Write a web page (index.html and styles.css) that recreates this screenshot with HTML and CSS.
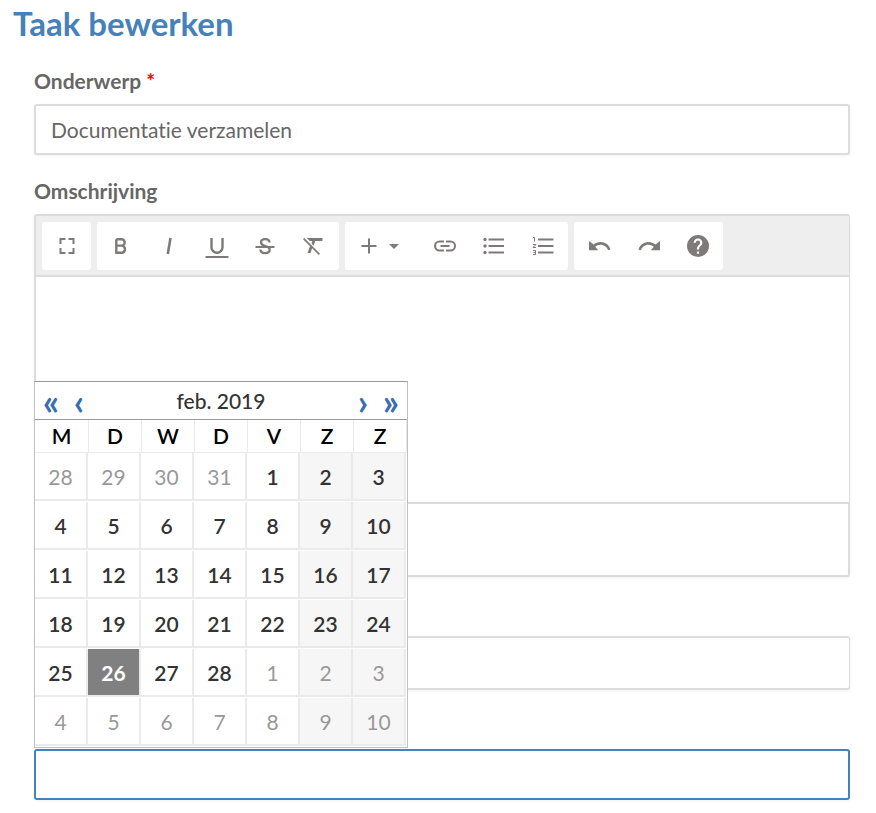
FILE: index.html
```
<!DOCTYPE html>
<html lang="nl">
<head>
<meta charset="utf-8">
<meta name="viewport" content="width=device-width, initial-scale=1">
<title>Taak bewerken</title>
<link rel="stylesheet" href="styles.css">
</head>
<body>
<h1 class="title">Taak bewerken</h1>
<form class="form">
  <label class="label" for="subject">Onderwerp <span class="required">*</span></label>
  <input class="input" id="subject" type="text" value="Documentatie verzamelen">

  <label class="label label-next" for="description">Omschrijving</label>
  <div class="editor">
    <div class="toolbar" role="toolbar">
      <div class="group">
        <button class="tool" type="button" aria-label="Volledig scherm"><svg viewBox="0 0 24 24"><path d="M5.500 10V5h5M13.500 5h5v5M18.500 14v5h-5M10.500 19h-5v-5" fill="none" stroke="currentColor" stroke-width="2"/></svg></button>
      </div>
      <div class="group group-text">
        <button class="tool" type="button" aria-label="Vet"><svg viewBox="0 0 24 24"><path d="M7.300 5.200v13.600h5.800a3.700 3.700 0 0 0 0-7.200H7.300M12.500 11.600a3.200 3.200 0 0 0 0-6.400H7.300" fill="none" stroke="currentColor" stroke-width="2.400"/></svg></button>
        <button class="tool" type="button" aria-label="Cursief"><svg viewBox="0 0 24 24"><path d="M13.500 4L10.800 20" fill="none" stroke="currentColor" stroke-width="2.600"/></svg></button>
        <button class="tool" type="button" aria-label="Onderstrepen"><svg viewBox="0 0 24 24"><path d="M6.500 4v9.300a5.500 5.500 0 0 0 11 0V4" fill="none" stroke="currentColor" stroke-width="2.400"/><path d="M.5 23h23" stroke="currentColor" stroke-width="2"/></svg></button>
        <button class="tool" type="button" aria-label="Doorhalen"><svg viewBox="0 0 24 24"><path d="M16.500 8.500c0-2-1.800-3.400-4.300-3.400S8 6.600 8 8.500s1.600 2.800 4.200 3.500 4.500 1.700 4.500 3.800-1.800 3.300-4.500 3.300-4.700-1.400-4.700-3.600" fill="none" stroke="currentColor" stroke-width="2.300"/><path d="M2.500 13h19" stroke="currentColor" stroke-width="2"/></svg></button>
        <button class="tool" type="button" aria-label="Opmaak wissen"><svg viewBox="0 0 24 24"><path d="M3.270 4L2 5.270l6.970 6.970L6.500 19h3l1.570-4.660L17.730 21 19 19.730 3.550 4.270 3.270 4zM6 4v.18L8.820 7h2.400l-.72 2.680 2.100 2.100L14.210 7H21.500V4H6z" fill="currentColor"/></svg></button>
      </div>
      <div class="group group-insert">
        <button class="tool tool-wide" type="button" aria-label="Invoegen"><svg viewBox="0 0 24 24"><path d="M12 4.500v15M4.500 12h15" stroke="currentColor" stroke-width="2"/></svg><span class="caret"></span></button>
        <button class="tool" type="button" aria-label="Koppeling"><svg viewBox="0 0 24 24"><path d="M3.200 12A3.200 3.200 0 0 1 6.400 8.600H11V6.500H6.500a5.500 5.500 0 0 0 0 11H11v-2.100H6.400A3.200 3.200 0 0 1 3.200 12zM7.500 13h9v-2h-9zM17.500 6.500H13v2.100h4.600a3.400 3.400 0 0 1 0 6.800H13v2.100h4.500a5.500 5.500 0 0 0 0-11z" fill="currentColor"/></svg></button>
        <button class="tool" type="button" aria-label="Lijst"><svg viewBox="0 0 24 24"><path d="M6.500 5.500h15.500M6.500 12h15.500M6.500 18.500h15.500" stroke="currentColor" stroke-width="2"/><g fill="currentColor"><circle cx="3" cy="5.500" r="1.700"/><circle cx="3" cy="12" r="1.700"/><circle cx="3" cy="18.500" r="1.700"/></g></svg></button>
        <button class="tool" type="button" aria-label="Genummerde lijst"><svg viewBox="0 0 24 24"><path d="M7 5.500h15.500M7 12h15.500M7 18.500h15.500" stroke="currentColor" stroke-width="2"/><path d="M2 3.500h1.500v4M2 10.500h3L2 13.500h3M2 16.500h2.500v4H2M2.500 18.500h2" fill="none" stroke="currentColor"/></svg></button>
      </div>
      <div class="group group-history">
        <button class="tool" type="button" aria-label="Ongedaan maken"><svg viewBox="0 0 24 24"><path d="M12.500 8c-2.650 0-5.050.99-6.900 2.600L1 7v9.200h9.200L7.200 12.800c1.400-1.200 3.200-2.100 5.300-2.100 3.500 0 6.500 2.300 7.600 5.500l2.400-.8C21.100 11 17.200 8 12.500 8z" fill="currentColor"/></svg></button>
        <button class="tool" type="button" aria-label="Opnieuw"><svg viewBox="0 0 24 24"><path d="M11.500 8c2.650 0 5.050.99 6.900 2.600L23 7v9.200h-9.200l3-3.400c-1.400-1.200-3.200-2.100-5.300-2.100-3.500 0-6.500 2.300-7.600 5.500l-2.400-.8C2.900 11 6.800 8 11.500 8z" fill="currentColor"/></svg></button>
        <button class="tool" type="button" aria-label="Help"><svg viewBox="0 0 24 24"><path d="M12 1a11 11 0 1 0 0 22 11 11 0 0 0 0-22zm1.100 18.700h-2.200v-2.200h2.200zm2.300-8.500l-1 1c-.8.800-1.300 1.500-1.300 3.200h-2.200v-.6c0-1.200.5-2.300 1.300-3.100l1.400-1.400c.4-.4.600-.9.600-1.500a2.200 2.200 0 0 0-4.400 0H7.600a4.400 4.400 0 0 1 8.800 0c0 .9-.4 1.800-1 2.400z" fill="currentColor"/></svg></button>
      </div>
    </div>
    <textarea class="editor-text" id="description"></textarea>
  </div>
  <textarea class="input attachment" aria-label="Bijlage"></textarea>

  <input class="input assignee" type="text" aria-label="Toegewezen aan">

  <div class="date-field">
    <input class="input input-active" type="text" aria-label="Einddatum">
    <div class="calendar">
      <div class="calendar-head">
        <button class="nav" type="button" aria-label="Vorig jaar">«</button>
        <button class="nav" type="button" aria-label="Vorige maand">‹</button>
        <span class="month">feb. 2019</span>
        <button class="nav" type="button" aria-label="Volgende maand">›</button>
        <button class="nav" type="button" aria-label="Volgend jaar">»</button>
      </div>
      <table class="days">
        <thead><tr><th>M</th><th>D</th><th>W</th><th>D</th><th>V</th><th>Z</th><th>Z</th></tr></thead>
        <tbody>
          <tr><td><button type="button" class="day other">28</button></td><td><button type="button" class="day other">29</button></td><td><button type="button" class="day other">30</button></td><td><button type="button" class="day other">31</button></td><td><button type="button" class="day">1</button></td><td><button type="button" class="day weekend">2</button></td><td><button type="button" class="day weekend">3</button></td></tr>
          <tr><td><button type="button" class="day">4</button></td><td><button type="button" class="day">5</button></td><td><button type="button" class="day">6</button></td><td><button type="button" class="day">7</button></td><td><button type="button" class="day">8</button></td><td><button type="button" class="day weekend">9</button></td><td><button type="button" class="day weekend">10</button></td></tr>
          <tr><td><button type="button" class="day">11</button></td><td><button type="button" class="day">12</button></td><td><button type="button" class="day">13</button></td><td><button type="button" class="day">14</button></td><td><button type="button" class="day">15</button></td><td><button type="button" class="day weekend">16</button></td><td><button type="button" class="day weekend">17</button></td></tr>
          <tr><td><button type="button" class="day">18</button></td><td><button type="button" class="day">19</button></td><td><button type="button" class="day">20</button></td><td><button type="button" class="day">21</button></td><td><button type="button" class="day">22</button></td><td><button type="button" class="day weekend">23</button></td><td><button type="button" class="day weekend">24</button></td></tr>
          <tr><td><button type="button" class="day">25</button></td><td><button type="button" class="day today">26</button></td><td><button type="button" class="day">27</button></td><td><button type="button" class="day">28</button></td><td><button type="button" class="day other">1</button></td><td><button type="button" class="day other weekend">2</button></td><td><button type="button" class="day other weekend">3</button></td></tr>
          <tr><td><button type="button" class="day other">4</button></td><td><button type="button" class="day other">5</button></td><td><button type="button" class="day other">6</button></td><td><button type="button" class="day other">7</button></td><td><button type="button" class="day other">8</button></td><td><button type="button" class="day other weekend">9</button></td><td><button type="button" class="day other weekend">10</button></td></tr>
        </tbody>
      </table>
    </div>
  </div>
</form>
</body>
</html>
```
FILE: styles.css
```
* {
  box-sizing: border-box;
}

body {
  margin: 0;
  padding: 0 26px 12px 13px;
  background: #fff;
  color: #666;
  font-family: Lato, "Liberation Sans", sans-serif;
  font-size: 21px;
  font-variant-ligatures: none;
}

button,
input,
textarea {
  margin: 0;
  font: inherit;
  font-variant-ligatures: none;
}

button {
  padding: 0;
  border: 0;
  background: none;
  cursor: pointer;
}

.title {
  margin: 0;
  color: #4682b9;
  font-size: 33px;
  font-weight: 700;
  line-height: 46px;
}

.form {
  padding: 20px 0 0 21px;
}

.label {
  display: block;
  margin-bottom: 8px;
  font-weight: 700;
  line-height: 30px;
}

.label-next {
  margin-top: 21px;
}

.required {
  color: #f00;
}

.input {
  display: block;
  width: 100%;
  height: 51px;
  padding: 0 15px;
  border: 2px solid #dcdcdc;
  border-radius: 3px;
  outline: 0;
  background: #fff;
  box-shadow: 0 1px 3px rgba(0, 0, 0, 0.06);
  color: #666;
}

.editor {
  border: 2px solid #dcdcdc;
  border-width: 2px 1px 0 2px;
  border-radius: 3px 3px 0 0;
  box-shadow: 0 1px 3px rgba(0, 0, 0, 0.06);
}

.toolbar {
  display: flex;
  flex-wrap: wrap;
  gap: 6px;
  padding: 6px 6px 5px;
  border-bottom: 2px solid #dcdcdc;
  background: #eee;
}

.group {
  display: flex;
  border-radius: 3px;
  background: #fff;
}

.tool {
  display: flex;
  align-items: center;
  justify-content: center;
  width: 49px;
  height: 48px;
  color: #7f7a7a;
}

.group-text {
  padding-right: 2px;
}

.group-text .tool {
  width: 48px;
}

.group-insert {
  padding-right: 1px;
}

.group-history {
  padding: 0 1px;
}

.tool svg {
  width: 24px;
  height: 24px;
  overflow: visible;
}

.tool-wide {
  gap: 8px;
  justify-content: flex-start;
  width: 75px;
  padding-left: 12px;
}

.caret {
  border: 5px solid transparent;
  border-top-color: currentColor;
  border-bottom: 0;
}

.editor-text {
  display: block;
  width: 100%;
  height: 225px;
  padding: 15px;
  border: 0;
  outline: 0;
  resize: none;
}

.attachment {
  height: 75px;
  border-radius: 0 0 3px 3px;
  resize: none;
}

.assignee {
  height: 54px;
  margin-top: 59px;
  border-right-width: 1px;
}

.date-field {
  position: relative;
  margin-top: 59px;
}

.input-active {
  border-color: #4682b9;
}

.calendar {
  position: absolute;
  bottom: calc(100% + 1px);
  left: 0;
  width: 374px;
  border: 1px solid #c0c0c0;
  border-top-color: #999;
  background: #fff;
}

.calendar-head {
  display: flex;
  align-items: center;
  height: 38px;
  padding: 0 2px;
  border-bottom: 1px solid #999;
}

.nav {
  width: 28px;
  color: #3a6db5;
  font-size: 36px;
  font-weight: 700;
  line-height: 32px;
}

.month {
  flex: 1;
  color: #333;
  font-weight: 500;
  text-align: center;
}

.days {
  width: 371px;
  border-collapse: separate;
  border-spacing: 0;
  table-layout: fixed;
}

.days th {
  height: 33px;
  padding: 0;
  border-bottom: 1px solid #eaeaea;
  color: #000;
  font-weight: 600;
  line-height: 32px;
}

.days th + th {
  border-left: 1px solid #eaeaea;
}

.days th:last-child {
  box-shadow: 1px 0 #eaeaea;
}

.days td {
  padding: 0 0 1px;
}

.day {
  display: block;
  width: 100%;
  height: 48px;
  border: 0 solid #eaeaea;
  border-width: 0 2px 2px 0;
  background: #fff;
  color: #333;
  font-weight: 600;
}

.weekend {
  background: #f6f6f6;
}

.other {
  color: #999;
  font-weight: 400;
}

.today {
  background: #808080;
  color: #fff;
  font-weight: 700;
}
```
